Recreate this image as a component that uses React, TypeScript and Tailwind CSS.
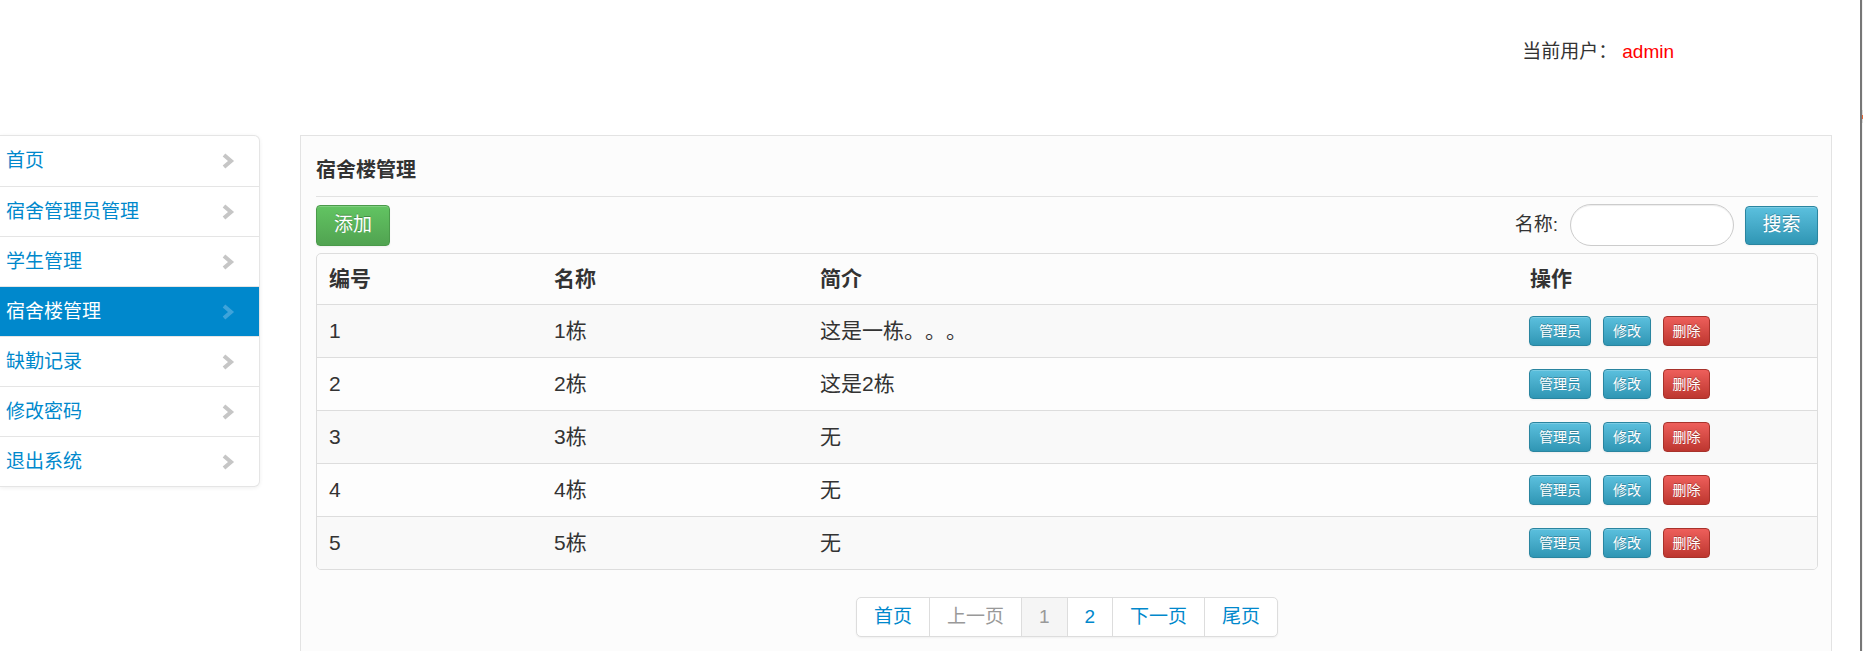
const menu = [
  { label: "首页" },
  { label: "宿舍管理员管理" },
  { label: "学生管理" },
  { label: "宿舍楼管理", active: true },
  { label: "缺勤记录" },
  { label: "修改密码" },
  { label: "退出系统" },
];

const rows = [
  { id: 1, name: "1栋", intro: "这是一栋。。。" },
  { id: 2, name: "2栋", intro: "这是2栋" },
  { id: 3, name: "3栋", intro: "无" },
  { id: 4, name: "4栋", intro: "无" },
  { id: 5, name: "5栋", intro: "无" },
];

const pages = [
  { label: "首页" },
  { label: "上一页", disabled: true },
  { label: "1", current: true },
  { label: "2" },
  { label: "下一页" },
  { label: "尾页" },
];

const Chevron = ({ active }: { active?: boolean }) => (
  <svg width="14" height="16" viewBox="0 0 14 16" className="shrink-0">
    <polyline
      points="3,2 10,8 3,14"
      fill="none"
      stroke={active ? "#3ea3da" : "#c6c6c6"}
      strokeWidth="4"
      strokeLinejoin="miter"
    />
  </svg>
);

const btnInfo =
  "bg-linear-to-b from-[#5bc0de] to-[#2f96b4] border border-[#2a85a0] text-white [text-shadow:0_-1px_0_rgba(0,0,0,0.25)] shadow-[inset_0_1px_0_rgba(255,255,255,0.2),0_1px_2px_rgba(0,0,0,0.05)]";

const Sidebar = () => (
  <ul className="w-[260px] bg-white border border-l-0 border-[#e5e5e5] rounded-r-[6px] shadow-[0_1px_4px_rgba(0,0,0,0.065)] overflow-hidden">
    {menu.map((m, i) => (
      <li
        key={m.label}
        className={`flex items-center justify-between h-[50px] pl-[6px] pr-[24px] text-[19px] leading-[24px] ${
          i > 0 ? "border-t border-[#e5e5e5]" : ""
        } ${m.active ? "bg-[#0088cc] text-white border-[#0088cc]" : "text-[#0088cc]"}`}
      >
        <span>{m.label}</span>
        <Chevron active={m.active} />
      </li>
    ))}
  </ul>
);

const App = () => {
  return (
    <div className="flex h-[651px] overflow-hidden bg-white text-[#333] [text-spacing-trim:space-all] font-[family-name:'Liberation_Sans','Noto_Sans_CJK_SC',sans-serif]">
      <div className="w-[1860px] shrink-0">
        <header className="h-[135px] flex justify-end pr-[186px] pt-[38px]">
          <div className="text-[19px] leading-[28px] h-[28px]">
            当前用户：<span className="ml-[5px] text-[#ff0000]">admin</span>
          </div>
        </header>

        <div className="flex items-start">
          <Sidebar />

          <section className="ml-[40px] w-[1532px] h-[540px] bg-[#fcfcfc] border border-[#e3e3e3] pl-[15px] pr-[13px]">
            <div className="pt-[20px] pb-[12px] border-b border-[#e2e2e2]">
              <h4 className="text-[20px] leading-[28px] font-bold">宿舍楼管理</h4>
            </div>

            <div className="mt-[7px] h-[42px] flex items-center justify-between">
              <button className="w-[74px] h-[41px] rounded-[4px] text-[19px] text-white bg-linear-to-b from-[#62c462] to-[#51a351] border border-[#4a9a4a] [text-shadow:0_-1px_0_rgba(0,0,0,0.25)] shadow-[inset_0_1px_0_rgba(255,255,255,0.2),0_1px_2px_rgba(0,0,0,0.05)]">
                添加
              </button>
              <div className="flex items-center">
                <span className="text-[19px] leading-[24px]">名称:</span>
                <input
                  className="ml-[12px] w-[164px] h-[42px] rounded-full border border-[#cccccc] bg-white px-4 text-[18px] outline-none shadow-[inset_0_1px_1px_rgba(0,0,0,0.075)]"
                  type="text"
                />
                <button className={`ml-[11px] w-[73px] h-[39px] rounded-[4px] text-[19px] ${btnInfo}`}>
                  搜索
                </button>
              </div>
            </div>

            <div className="mt-[7px] border border-[#dddddd] rounded-[5px] overflow-hidden text-[21px] leading-[28px]">
              <div className="grid grid-cols-[225px_266px_710px_1fr] h-[50px] items-center font-bold">
                <div className="px-[12px]">编号</div>
                <div className="px-[12px]">名称</div>
                <div className="px-[12px]">简介</div>
                <div className="px-[12px]">操作</div>
              </div>
              {rows.map((r, i) => (
                <div
                  key={r.id}
                  className={`grid grid-cols-[225px_266px_710px_1fr] h-[53px] items-center border-t border-[#dddddd] ${
                    i % 2 === 0 ? "bg-[#f9f9f9]" : "bg-[#fdfdfd]"
                  }`}
                >
                  <div className="px-[12px]">{r.id}</div>
                  <div className="px-[12px]">{r.name}</div>
                  <div className="px-[12px]">{r.intro}</div>
                  <div className="px-[11px] flex items-center gap-[12px] text-[14px] leading-[20px]">
                    <button className={`w-[62px] h-[30px] rounded-[4px] ${btnInfo}`}>管理员</button>
                    <button className={`w-[48px] h-[30px] rounded-[4px] ${btnInfo}`}>修改</button>
                    <button className="w-[47px] h-[30px] rounded-[4px] text-white bg-linear-to-b from-[#ee5f5b] to-[#bd362f] border border-[#a8322b] [text-shadow:0_-1px_0_rgba(0,0,0,0.25)]">
                      删除
                    </button>
                  </div>
                </div>
              ))}
            </div>

            <div className="mt-[27px] flex justify-center">
              <ul className="flex h-[40px] border border-[#dddddd] rounded-[5px] overflow-hidden bg-white shadow-[0_1px_2px_rgba(0,0,0,0.05)] text-[19px]">
                {pages.map((p, i) => (
                  <li
                    key={p.label}
                    className={`flex items-center px-[17px] ${i > 0 ? "border-l border-[#dddddd]" : ""} ${
                      p.current
                        ? "bg-[#f5f5f5] text-[#999999]"
                        : p.disabled
                        ? "text-[#999999]"
                        : "text-[#0088cc]"
                    }`}
                  >
                    {p.label}
                  </li>
                ))}
              </ul>
            </div>
          </section>
        </div>
      </div>

      <div className="w-[2px] shrink-0 bg-[#777777]" />
      <div className="flex-1 flex flex-col bg-[#f2f2f2]">
        <div className="h-[110px]" />
        <div className="h-[13px] bg-[#d8d8d8] flex flex-col justify-center">
          <div className="h-[4px] bg-[#e0663a]" />
        </div>
      </div>
    </div>
  );
};

export default App;
